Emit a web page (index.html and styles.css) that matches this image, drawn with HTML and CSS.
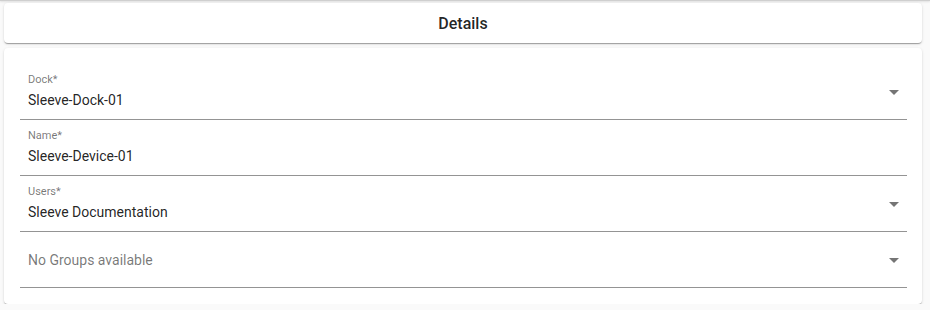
FILE: index.html
```html
<!DOCTYPE html>
<html lang="en">
<head>
    <meta charset="UTF-8">
    <title>Details</title>
    <link rel="stylesheet" href="styles.css">
</head>
<body>
    <div class="top-edge"></div>
    <div class="card header-card">
        <h2>Details</h2>
    </div>

    <div class="card form-card">
        <div class="field select">
            <span class="label">Dock*</span>
            <span class="value">Sleeve-Dock-01</span>
            <span class="arrow"></span>
        </div>
        <div class="field">
            <span class="label">Name*</span>
            <span class="value">Sleeve-Device-01</span>
        </div>
        <div class="field select">
            <span class="label">Users*</span>
            <span class="value">Sleeve Documentation</span>
            <span class="arrow"></span>
        </div>
        <div class="field select empty">
            <span class="value placeholder">No Groups available</span>
            <span class="arrow"></span>
        </div>
    </div>
</body>
</html>
```

FILE: styles.css
```css
body {
    font-family: Roboto, "Helvetica Neue", sans-serif;
    margin: 0;
    padding: 0 8px 0 4px;
    background-color: #fafafa;
}
.top-edge {
    height: 1px;
    margin: 0 -8px 2px -4px;
    background: #cfcfcf;
    box-shadow: 0 1px 2px rgba(0, 0, 0, 0.15);
}
.card {
    background: white;
    border-radius: 4px;
    box-shadow: 0 2px 1px -1px rgba(0, 0, 0, 0.2), 0 1px 1px 0 rgba(0, 0, 0, 0.14), 0 1px 3px 0 rgba(0, 0, 0, 0.12);
}
.header-card {
    height: 40px;
    display: flex;
    align-items: center;
    justify-content: center;
}
.header-card h2 {
    margin: 0;
    font-size: 16px;
    font-weight: 500;
    color: rgba(0, 0, 0, 0.87);
}
.form-card {
    margin-top: 5px;
    padding: 16px 15px 16px 16px;
}
.field {
    position: relative;
    height: 46px;
    border-bottom: 1px solid #949494;
    display: flex;
    flex-direction: column;
    padding: 9px 0 0 8px;
}
.field.empty {
    height: 55px;
    padding-top: 0;
    justify-content: center;
}
.label {
    font-size: 11px;
    line-height: 14px;
    height: 14px;
    color: rgba(0, 0, 0, 0.54);
}
.value {
    font-size: 14px;
    line-height: 20px;
    margin-top: 3px;
    color: rgba(0, 0, 0, 0.87);
}
.value.placeholder {
    margin-top: 0;
    color: rgba(0, 0, 0, 0.54);
}
.arrow {
    position: absolute;
    right: 8px;
    top: 26px;
    width: 0;
    height: 0;
    border-left: 5px solid transparent;
    border-right: 5px solid transparent;
    border-top: 5px solid rgba(0, 0, 0, 0.54);
}
```
